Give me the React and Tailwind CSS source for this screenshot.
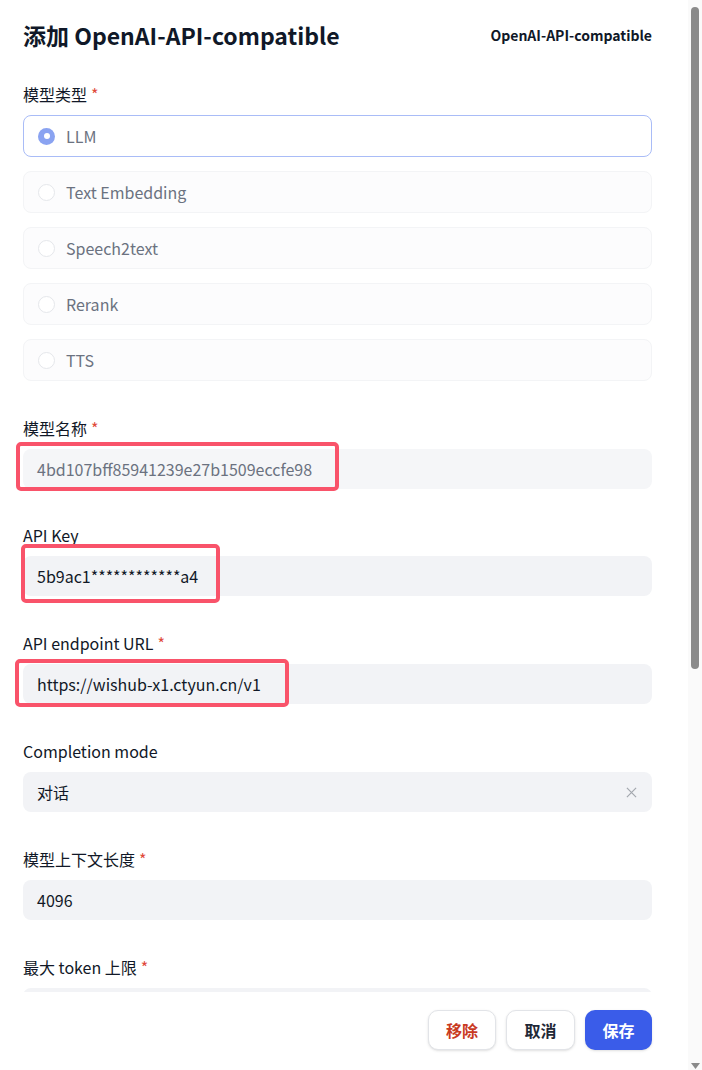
import React from "react";

const font = { fontFamily: '"Noto Sans CJK SC", "Noto Sans", sans-serif' };

function Label({ text, required }) {
  return (
    <div className="h-5 leading-5 mb-[11px] text-[16px] text-[#111827]">
      {text}
      {required && <span className="ml-1 text-[#e0493a]">*</span>}
    </div>
  );
}

function Radio({ label, selected }) {
  return (
    <div
      className={
        "flex h-[42px] items-center gap-[11px] rounded-lg border pl-[14px] " +
        (selected ? "border-[#a9bcf7] bg-white" : "border-[#f3f4f6] bg-[#fcfcfd]")
      }
    >
      {selected ? (
        <div className="flex h-[17px] w-[17px] items-center justify-center rounded-full bg-[#8aa3f1]">
          <div className="h-[6px] w-[6px] rounded-full bg-white" />
        </div>
      ) : (
        <div className="h-[17px] w-[17px] rounded-full border border-[#e5e7eb] bg-white" />
      )}
      <span className="text-[16px] text-[#6b7280]">{label}</span>
    </div>
  );
}

function Field({ label, required, value, muted, highlight, clear, className = "" }) {
  return (
    <div className={className}>
      <Label text={label} required={required} />
      <div className="relative">
        <div
          className={
            "flex h-10 items-center justify-between rounded-lg px-[14px] text-[16px] " +
            (muted ? "bg-[#f5f6f8] text-[#6b7280]" : "bg-[#f2f3f6] text-[#111827]")
          }
        >
          <span>{value}</span>
          {clear && (
            <svg width="11" height="11" viewBox="0 0 12 12" className="mr-[1px]">
              <path d="M1 1L11 11M11 1L1 11" stroke="#a3a7ae" strokeWidth="1.3" />
            </svg>
          )}
        </div>
        {highlight && (
          <div
            className={
              "pointer-events-none absolute rounded-[5px] border-[4px] border-[#f9536a] " + highlight
            }
          />
        )}
      </div>
    </div>
  );
}

export default function App() {
  return (
    <div className="flex h-[1070px] w-[702px] overflow-hidden bg-white" style={font}>
      <div className="flex w-[688px] flex-col">
        <div className="h-[992px] overflow-hidden pl-[23px] pr-[36px] pt-[19px]">
          <div className="flex h-8 items-center justify-between">
            <h1 className="text-[23px] font-bold text-[#101828]">添加 OpenAI-API-compatible</h1>
            <span className="text-[14px] font-bold text-[#101828]">OpenAI-API-compatible</span>
          </div>

          <div className="mt-[33px]">
            <Label text="模型类型" required />
            <div className="flex flex-col gap-[14px]">
              <Radio label="LLM" selected />
              <Radio label="Text Embedding" />
              <Radio label="Speech2text" />
              <Radio label="Rerank" />
              <Radio label="TTS" />
            </div>
          </div>

          <Field
            className="mt-[37px]"
            label="模型名称"
            required
            value="4bd107bff85941239e27b1509eccfe98"
            muted
            highlight="left-[-7px] top-[-7px] w-[323px] h-[49px]"
          />
          <Field
            className="mt-9"
            label="API Key"
            value="5b9ac1************a4"
            highlight="left-[-2px] top-[-12px] w-[199px] h-[59px]"
          />
          <Field
            className="mt-[37px]"
            label="API endpoint URL"
            required
            value="https://wishub-x1.ctyun.cn/v1"
            highlight="left-[-8px] top-[-5px] w-[274px] h-[48px]"
          />
          <Field className="mt-[37px]" label="Completion mode" value="对话" clear />
          <Field className="mt-[37px]" label="模型上下文长度" required value="4096" />
          <Field className="mt-[37px]" label="最大 token 上限" required value="" />
        </div>

        <div className="flex flex-1 items-start justify-end gap-[10px] pr-[36px] pt-[18px]">
          <button className="h-10 w-[68px] rounded-[10px] border border-[#e2e4e8] bg-white text-[16px] font-bold text-[#c93a1f] shadow-sm">
            移除
          </button>
          <button className="h-10 w-[69px] rounded-[10px] border border-[#e2e4e8] bg-white text-[16px] font-bold text-[#1f2937] shadow-sm">
            取消
          </button>
          <button className="h-10 w-[67px] rounded-[10px] bg-[#3a5ce9] text-[16px] font-bold text-white shadow-sm">
            保存
          </button>
        </div>
      </div>

      <div className="flex w-[14px] flex-col items-center justify-between bg-[#fafafa] pb-[1px] pt-[7px]">
        <div className="h-[662px] w-[8px] rounded-full bg-[#8a8a8a]" />
        <svg width="9" height="6" viewBox="0 0 9 6">
          <path d="M0 0H9L4.5 6Z" fill="#8a8a8a" />
        </svg>
      </div>
    </div>
  );
}
